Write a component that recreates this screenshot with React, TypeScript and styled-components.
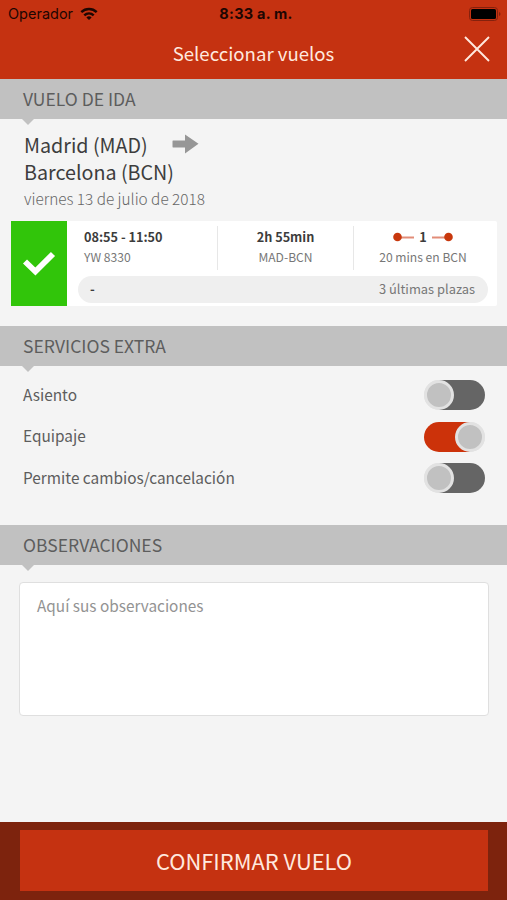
import React, { useState } from "react";
import styled, { createGlobalStyle } from "styled-components";

const red = "#c53211";

const GlobalStyle = createGlobalStyle`
  * { box-sizing: border-box; }
  body { margin: 0; background: #f4f4f4; }
  button { font: inherit; border: 0; padding: 0; background: none; cursor: pointer; }
`;

const Screen = styled.div`
  width: 507px;
  height: 900px;
  display: flex;
  flex-direction: column;
  overflow: hidden;
  background: #f4f4f4;
  color: #5d5d5d;
  font-family: "Noto Sans CJK SC", "Noto Sans", sans-serif;
  white-space: nowrap;
`;

const StatusBar = styled.div`
  height: 28px;
  padding: 0 6px 0 8px;
  display: grid;
  grid-template-columns: 1fr auto 1fr;
  align-items: center;
  background: ${red};
  color: #1d0602;
  font: 14.5px/28px Inter, sans-serif;
`;

const Carrier = styled.div`
  display: flex;
  align-items: center;
  gap: 7px;
`;

const Clock = styled.div`
  font-weight: 700;
  letter-spacing: 0.25px;
  padding-left: 3px;
`;

const Battery = styled.svg`
  justify-self: end;
`;

const TitleBar = styled.header`
  height: 51px;
  flex: none;
  display: grid;
  grid-template-columns: 60px 1fr 60px;
  background: ${red};
`;

const Title = styled.h1`
  grid-column: 2;
  margin: 0;
  padding-top: 10px;
  text-align: center;
  color: #ffe9df;
  font-size: 18.6px;
  line-height: 30px;
  font-weight: 400;
`;

const CloseButton = styled.button`
  align-self: start;
  justify-self: end;
  margin: 8px 17px 0 0;
  height: 26px;
`;

const SectionBar = styled.h2`
  position: relative;
  flex: none;
  height: 40px;
  margin: 0;
  padding-left: 23px;
  background: #c1c1c1;
  color: #5d5d5d;
  font-size: 17.5px;
  line-height: 40px;
  font-weight: 400;

  &::after {
    content: "";
    position: absolute;
    top: 40px;
    left: 22px;
    border: 6.5px solid transparent;
    border-top-color: #c1c1c1;
    border-bottom: 0;
  }
`;

const Journey = styled.section`
  height: 207px;
  flex: none;
  padding: 12px 10px 0 11px;
`;

const Route = styled.div`
  padding-left: 13px;
  color: #3d3d3d;
  font-size: 19.7px;
  line-height: 27px;
`;

const RouteLine = styled.div`
  display: flex;
  align-items: center;
  gap: 24px;
  height: 27px;
`;

const TravelDate = styled.div`
  padding-left: 13px;
  height: 36px;
  font-size: 15.35px;
  line-height: 27px;
  font-weight: 300;
  color: #666;
`;

const FlightCard = styled.div`
  height: 85px;
  display: flex;
  background: #fff;
  border-radius: 2px;
`;

const Selected = styled.div`
  width: 56px;
  display: flex;
  align-items: center;
  justify-content: center;
  background: #31c50a;
`;

const FlightBody = styled.div`
  flex: 1;
  padding: 5px 9px 0 11px;
`;

const FlightColumns = styled.div`
  height: 44px;
  display: grid;
  grid-template-columns: 139px 136px 1fr;
`;

const Column = styled.div<{ $start?: boolean; $inset?: number }>`
  display: flex;
  flex-direction: column;
  align-items: ${(p) => (p.$start ? "flex-start" : "center")};
  padding-left: ${(p) => p.$inset ?? 0}px;
  padding-top: 1px;
  & + & { border-left: 1px solid #e7e7e7; }
`;

const Strong = styled.div`
  height: 20px;
  display: flex;
  align-items: center;
  gap: 5px;
  color: #3c3c3c;
  font-size: 12.7px;
  line-height: 20px;
  font-weight: 700;
`;

const Detail = styled.div`
  font-size: 12.1px;
  line-height: 19px;
  color: #777;
`;

const Seats = styled.div`
  height: 27px;
  margin-top: 6px;
  padding: 0 13px 0 12px;
  display: flex;
  justify-content: space-between;
  border-radius: 14px;
  background: #efefef;
  color: #777;
  font-size: 12.9px;
  line-height: 26px;

  b { color: #3c3c3c; }
`;

const Options = styled.section`
  height: 159px;
  flex: none;
  padding: 8px 22px 0 23px;
`;

const OptionRow = styled.div`
  height: 41.6px;
  display: flex;
  align-items: center;
  justify-content: space-between;
  font-size: 15.4px;
  line-height: 24px;
`;

const OptionLabel = styled.span`
  padding-bottom: 2px;
`;

const Toggle = styled.button<{ $on: boolean }>`
  width: 61px;
  height: 30px;
  margin-top: 1px;
  display: flex;
  justify-content: ${(p) => (p.$on ? "flex-end" : "flex-start")};
  border-radius: 15px;
  background: ${(p) =>
    p.$on
      ? "linear-gradient(90deg, #cc320a 75%, #e2e2e2 75%)"
      : "linear-gradient(90deg, #e2e2e2 25%, #656565 25%)"};
`;

const Knob = styled.span`
  width: 30px;
  height: 30px;
  border: 3px solid #e2e2e2;
  border-radius: 50%;
  background: #c1c1c1;
`;

const Notes = styled.section`
  flex: 1;
  padding: 17px 18px 0 19px;
`;

const NotesField = styled.textarea`
  display: block;
  width: 100%;
  height: 134px;
  padding: 9px 17px;
  resize: none;
  outline: 0;
  border: 1.5px solid #dfdfdf;
  border-radius: 4px;
  background: #fff;
  font-family: inherit;
  font-size: 15.35px;
  line-height: 26px;
  &::placeholder { color: #939393; opacity: 1; }
`;

const Footer = styled.footer`
  height: 78px;
  flex: none;
  padding: 8px 19px 9px 20px;
  background: #7d230d;
`;

const ConfirmButton = styled.button`
  display: block;
  width: 100%;
  height: 61px;
  background: ${red};
  color: #ffe9df;
  font-size: 21.9px;
  line-height: 61px;
`;

function Wifi() {
  return (
    <svg width="18" height="14" viewBox="0 0 18 14" fill="none" stroke="#1d0602" strokeWidth="2.5">
      <path d="M1.3 5.2C5.8 1 12.2 1 16.7 5.2" />
      <path d="M4.3 8.4C7 5.9 11 5.9 13.7 8.4" />
      <path d="M9 13 6.4 10.4C7.9 9 10.1 9 11.6 10.4Z" fill="#1d0602" stroke="none" />
    </svg>
  );
}

function StopMark({ flip = false }: { flip?: boolean }) {
  return (
    <svg width="21" height="10" viewBox="0 0 21 10">
      <path d={flip ? "M0 5.5H14" : "M7 5.5H21"} stroke="#e28d78" strokeWidth="2" />
      <circle cx={flip ? 16.5 : 4.5} cy="5" r="4.3" fill="#c8380d" />
    </svg>
  );
}

const initialOptions = [
  { label: "Asiento", on: false },
  { label: "Equipaje", on: true },
  { label: "Permite cambios/cancelación", on: false },
];

export default function App() {
  const [options, setOptions] = useState(initialOptions);
  const flip = (index: number) =>
    setOptions(options.map((o, i) => (i === index ? { ...o, on: !o.on } : o)));

  return (
    <Screen>
      <GlobalStyle />
      <StatusBar>
        <Carrier>
          Operador
          <Wifi />
        </Carrier>
        <Clock>8:33 a. m.</Clock>
        <Battery width="32" height="14" viewBox="0 0 32 14">
          <rect x="0.5" y="0.5" width="28" height="13" rx="3" fill="none" stroke="#84210d" />
          <rect x="2" y="2" width="25" height="10" rx="1.5" fill="#000" />
          <path d="M30 5v4q1.5-.5 1.5-2T30 5" fill="#84210d" />
        </Battery>
      </StatusBar>
      <TitleBar>
        <Title>Seleccionar vuelos</Title>
        <CloseButton aria-label="Cerrar">
          <svg width="26" height="26" viewBox="0 0 26 26" stroke="#ffe9df" strokeWidth="1.9">
            <path d="M1 1 25 25M25 1 1 25" />
          </svg>
        </CloseButton>
      </TitleBar>

      <SectionBar>VUELO DE IDA</SectionBar>
      <Journey>
        <Route>
          <RouteLine>
            Madrid (MAD)
            <svg width="27" height="22" viewBox="0 0 27 22">
              <path d="M1 6.5H13V0.5L26.5 9.8 13 19.5V13.5H1Q0.5 13.5 .5 12.5V7.5Q.5 6.5 1 6.5Z" fill="#969696" />
            </svg>
          </RouteLine>
          <RouteLine>Barcelona (BCN)</RouteLine>
        </Route>
        <TravelDate>viernes 13 de julio de 2018</TravelDate>
        <FlightCard>
          <Selected>
            <svg width="34" height="28" viewBox="0 0 34 28">
              <path d="M3 11.5 13.4 21.5 31 4" fill="none" stroke="#fff" strokeWidth="5.8" />
            </svg>
          </Selected>
          <FlightBody>
            <FlightColumns>
              <Column $start $inset={6}>
                <Strong>08:55 - 11:50</Strong>
                <Detail>YW 8330</Detail>
              </Column>
              <Column>
                <Strong>2h 55min</Strong>
                <Detail>MAD-BCN</Detail>
              </Column>
              <Column $inset={4}>
                <Strong>
                  <StopMark />1<StopMark flip />
                </Strong>
                <Detail>20 mins en BCN</Detail>
              </Column>
            </FlightColumns>
            <Seats>
              <b>-</b>
              <span>3 últimas plazas</span>
            </Seats>
          </FlightBody>
        </FlightCard>
      </Journey>

      <SectionBar>SERVICIOS EXTRA</SectionBar>
      <Options>
        {options.map((option, i) => (
          <OptionRow key={option.label}>
            <OptionLabel>{option.label}</OptionLabel>
            <Toggle
              $on={option.on}
              role="switch"
              aria-checked={option.on}
              aria-label={option.label}
              onClick={() => flip(i)}
            >
              <Knob />
            </Toggle>
          </OptionRow>
        ))}
      </Options>

      <SectionBar>OBSERVACIONES</SectionBar>
      <Notes>
        <NotesField placeholder="Aquí sus observaciones" />
      </Notes>

      <Footer>
        <ConfirmButton>CONFIRMAR VUELO</ConfirmButton>
      </Footer>
    </Screen>
  );
}
